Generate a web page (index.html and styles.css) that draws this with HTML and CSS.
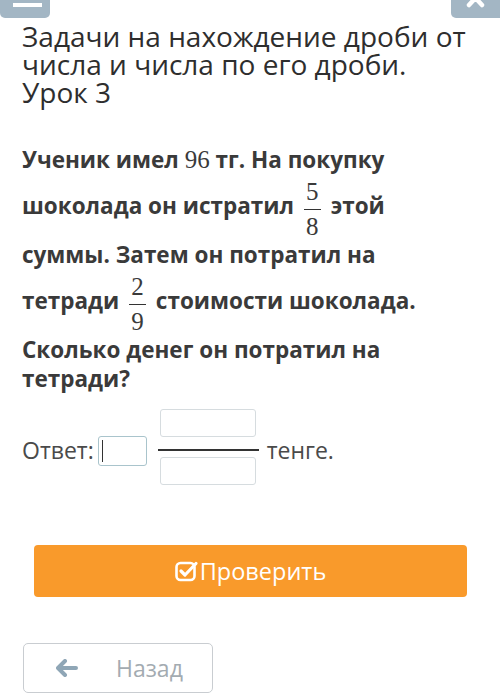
FILE: index.html
```html
<!DOCTYPE html>
<html>
<head>
    <title>Задачи на нахождение дроби</title>
    <meta charset="UTF-8">
    <link rel="stylesheet" href="styles.css">
</head>
<body>
    <div class="topbar">
        <div class="corner-btn">
            <span class="bar"></span>
        </div>
        <div class="corner-btn">
            <svg class="close-icon" width="20" height="8" viewBox="0 0 20 8">
                <path d="M3 -9 L16 5 M16 -9 L3 5" stroke="#fff" stroke-width="4.5" stroke-linecap="round" fill="none"/>
            </svg>
        </div>
    </div>

    <div class="container">
        <h1 class="title">Задачи на нахождение дроби от числа и числа по его дроби. Урок 3</h1>

        <p class="task">
            Ученик имел <span class="num">96</span> тг. На покупку шоколада он истратил
            <span class="frac"><span class="frac-num">5</span><span class="frac-bar"></span><span class="frac-den">8</span></span>
            этой суммы. Затем он потратил на тетради
            <span class="frac"><span class="frac-num">2</span><span class="frac-bar"></span><span class="frac-den">9</span></span>
            стоимости шоколада. Сколько денег он потратил на тетради?
        </p>

        <div class="answer">
            <span class="answer-label">Ответ:</span>
            <span class="input-box small"><span class="caret"></span></span>
            <span class="answer-frac">
                <span class="input-box wide"></span>
                <span class="answer-line"></span>
                <span class="input-box wide"></span>
            </span>
            <span class="answer-unit">тенге.</span>
        </div>

        <button class="check-btn">
            <svg width="24" height="22" viewBox="0 0 24 22">
                <rect x="1.5" y="3" width="18" height="17" rx="4" stroke="#fff" stroke-width="2.6" fill="none"/>
                <path d="M6 11 L10 15 L21 3.5" stroke="#fff" stroke-width="3.2" stroke-linecap="round" stroke-linejoin="round" fill="none"/>
            </svg>
            Проверить
        </button>

        <button class="back-btn">
            <svg width="22" height="18" viewBox="0 0 22 18">
                <path d="M9 2 L2 9 L9 16 M3 9 H20" stroke="#8fa6b6" stroke-width="4" stroke-linecap="round" stroke-linejoin="round" fill="none"/>
            </svg>
            <span>Назад</span>
        </button>
    </div>
</body>
</html>
```

FILE: styles.css
```css
body {
    margin: 0;
    padding: 0;
    background: #fff;
    color: #333;
    font-family: "Open Sans", "Liberation Sans", sans-serif;
}
.topbar {
    display: flex;
    justify-content: space-between;
    height: 18px;
}
.corner-btn {
    width: 50px;
    height: 18px;
    background-color: #a3b6c4;
    border-radius: 0 0 5px 5px;
    position: relative;
    overflow: hidden;
}
.corner-btn:last-child {
    width: 49px;
    border-radius: 0 0 0 5px;
}
.corner-btn .bar {
    position: absolute;
    left: 13px;
    top: 3px;
    width: 29px;
    height: 4px;
    background: #fff;
}
.close-icon {
    position: absolute;
    left: 15px;
    top: 0;
}
.container {
    padding: 0 22px;
}
.title {
    margin: 4px 0 0;
    font-size: 28px;
    font-weight: normal;
    line-height: 28px;
    color: #2e2e2e;
}
.task {
    margin: 39px 0 0;
    width: 430px;
    font-size: 22.5px;
    font-weight: bold;
    line-height: 29px;
    color: #3a3a3a;
}
.num {
    font-family: "Liberation Serif", serif;
    font-weight: normal;
    font-size: 25px;
}
.frac {
    display: inline-flex;
    flex-direction: column;
    align-items: center;
    vertical-align: 14px;
    padding: 4px 4px 0;
    font-family: "Liberation Serif", serif;
    font-weight: normal;
    font-size: 25px;
}
.frac-num {
    line-height: 28px;
}
.frac-den {
    line-height: 26px;
}
.frac-bar {
    width: 17px;
    height: 1px;
    margin: 3px 0 4px;
    background: #333;
}
.answer {
    display: flex;
    align-items: center;
    margin-top: 16px;
    font-size: 23px;
    color: #4a4a4a;
}
.answer-label {
    margin-right: 4px;
    margin-top: 6px;
}
.input-box {
    display: block;
    box-sizing: border-box;
    border: 1px solid #d6dcdf;
    border-radius: 3px;
    background: #fff;
}
.input-box.small {
    width: 49px;
    height: 30px;
    margin-top: 8px;
    border-color: #a9c4cc;
    position: relative;
}
.caret {
    position: absolute;
    left: 3px;
    top: 3px;
    width: 1px;
    height: 22px;
    background: #333;
}
.input-box.wide {
    width: 96px;
    height: 28px;
}
.answer-frac {
    display: flex;
    flex-direction: column;
    align-items: center;
    margin-left: 11px;
}
.answer-line {
    width: 101px;
    height: 1.5px;
    margin: 12px 0 6px;
    background: #333;
}
.answer-unit {
    margin-left: 8px;
    margin-top: 6px;
}
.check-btn {
    display: flex;
    align-items: center;
    justify-content: center;
    gap: 1px;
    width: 433px;
    height: 52px;
    margin: 60px 0 0 12px;
    border: none;
    border-radius: 4px;
    background-color: #f99a2b;
    color: #fff;
    font-family: "Open Sans", "Liberation Sans", sans-serif;
    font-size: 23.5px;
}
.back-btn {
    display: flex;
    align-items: center;
    width: 190px;
    height: 50px;
    margin: 46px 0 0 1px;
    padding: 0 0 0 32px;
    box-sizing: border-box;
    border: 1px solid #c9cdd1;
    border-radius: 5px;
    background: #fff;
    color: #a3abb1;
    font-family: "Open Sans", "Liberation Sans", sans-serif;
    font-size: 23px;
}
.back-btn span {
    margin-left: 38px;
}
```
